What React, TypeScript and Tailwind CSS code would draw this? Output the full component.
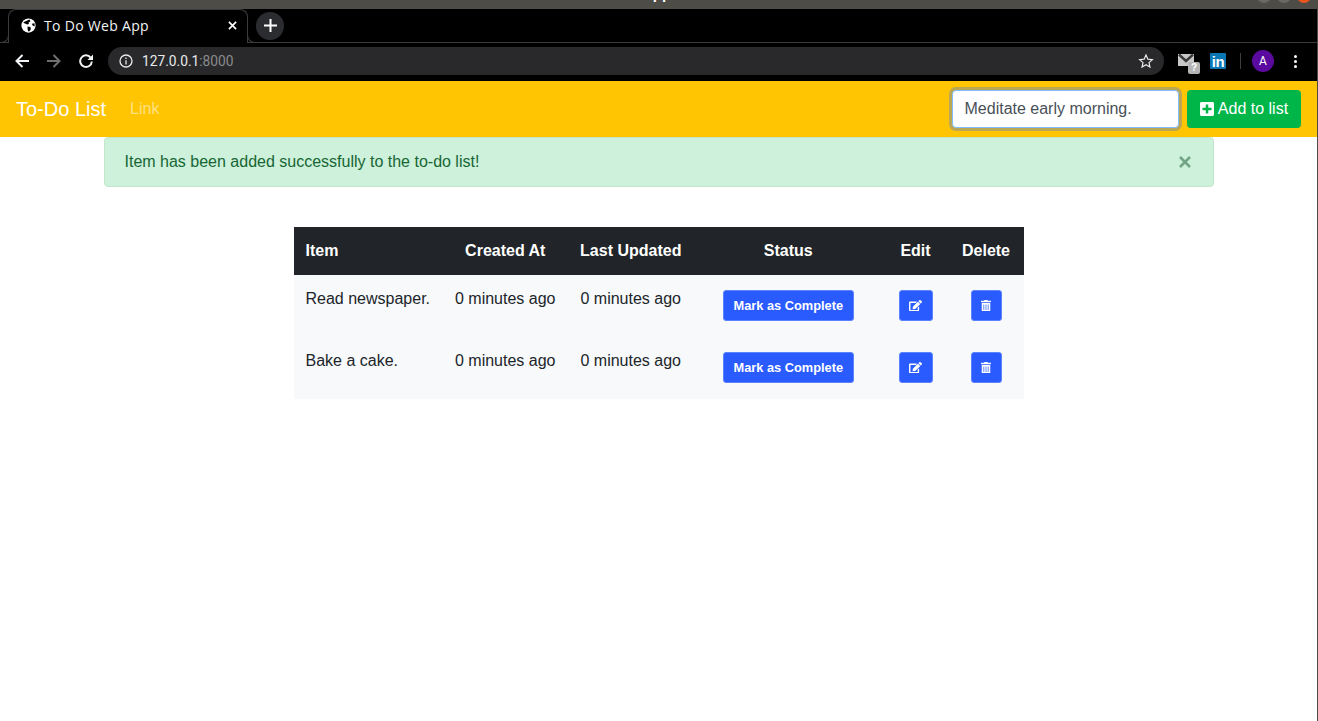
import React from "react";

const Globe = () => (
  <svg width="15" height="15" viewBox="0 0 16 16">
    <circle cx="8" cy="8" r="7.6" fill="#fff" />
    <path d="M2.5 4.5 L6 3 L9 1.5 L10 3.5 L8 5 L8.5 6.5 L6.5 7 L5 6 L3.5 5.5 Z M7 9 L10 9.5 L10.5 12 L9 14 L7.5 14 L7 11.5 Z M11.5 6 L14.5 5.5 L14.5 9 L12.5 8 Z" fill="#000" />
  </svg>
);

const BtnEdit = () => (
  <svg width="13" height="11.5" viewBox="0 0 576 512" fill="#fff">
    <path d="M402.6 83.2l90.2 90.2c3.8 3.8 3.8 10 0 13.8L274.4 405.6l-92.8 10.3c-12.4 1.4-22.9-9.1-21.5-21.5l10.3-92.8L388.8 83.2c3.8-3.8 10-3.8 13.8 0zm162-22.9l-48.8-48.8c-15.2-15.2-39.9-15.2-55.2 0l-35.4 35.4c-3.8 3.8-3.8 10 0 13.8l90.2 90.2c3.8 3.8 10 3.8 13.8 0l35.4-35.4c15.2-15.3 15.2-40 0-55.2zM384 346.2V448H64V128h229.8c3.2 0 6.2-1.3 8.5-3.5l40-40c7.6-7.6 2.2-20.5-8.5-20.5H48C21.5 64 0 85.5 0 112v352c0 26.5 21.5 48 48 48h352c26.5 0 48-21.5 48-48V306.2c0-10.7-12.9-16-20.5-8.5l-40 40c-2.2 2.3-3.5 5.3-3.5 8.5z" />
  </svg>
);

const BtnTrash = () => (
  <svg width="10" height="11.5" viewBox="0 0 448 512" fill="#fff">
    <path d="M32 464a48 48 0 0 0 48 48h288a48 48 0 0 0 48-48V128H32zm272-256a16 16 0 0 1 32 0v224a16 16 0 0 1-32 0zm-96 0a16 16 0 0 1 32 0v224a16 16 0 0 1-32 0zm-96 0a16 16 0 0 1 32 0v224a16 16 0 0 1-32 0zM432 32H312l-9.4-18.7A24 24 0 0 0 281.1 0H166.8a23.72 23.72 0 0 0-21.4 13.3L136 32H16A16 16 0 0 0 0 48v32a16 16 0 0 0 16 16h416a16 16 0 0 0 16-16V48a16 16 0 0 0-16-16z" />
  </svg>
);

const Row = ({ item }: { item: string }) => (
  <tr className="h-[62px] bg-[#f7f9fb] align-top text-[#212529]">
    <td className="pl-[11.5px] pt-[12px] whitespace-nowrap">{item}</td>
    <td className="pt-[12px] text-center whitespace-nowrap">0 minutes ago</td>
    <td className="pt-[12px] text-center whitespace-nowrap">0 minutes ago</td>
    <td className="pt-[15px] text-center">
      <button className="h-[31px] w-[131px] rounded-[3px] border border-[#5c83ff] bg-[#2a5bff] text-[12.8px] font-bold text-white">
        Mark as Complete
      </button>
    </td>
    <td className="pt-[15px] text-center">
      <button className="inline-flex h-[31px] w-[34px] items-center justify-center rounded-[3px] border border-[#5c83ff] bg-[#2a5bff]">
        <BtnEdit />
      </button>
    </td>
    <td className="pt-[15px] text-center">
      <button className="inline-flex h-[31px] w-[31px] items-center justify-center rounded-[3px] border border-[#5c83ff] bg-[#2a5bff]">
        <BtnTrash />
      </button>
    </td>
  </tr>
);

export default function App() {
  return (
    <div className="flex h-[721px] w-[1318px] flex-col overflow-hidden border-r border-[#4d4c46] bg-white font-['Liberation_Sans',sans-serif] text-base">
      {/* window title bar */}
      <div className="relative flex h-[9px] shrink-0 justify-end gap-[6px] overflow-hidden bg-[#4d4c46] pr-[6px]">
        <span className="absolute left-[642px] top-[-16px] text-[15px] font-bold leading-[20px] text-white">App</span>
        <span className="mt-[-11px] h-[14px] w-[14px] rounded-full bg-[#6a6963]" />
        <span className="mt-[-11px] h-[14px] w-[14px] rounded-full bg-[#6a6963]" />
        <span className="mt-[-11px] h-[14px] w-[14px] rounded-full bg-[#e9541f]" />
      </div>

      {/* tab strip */}
      <div className="relative flex h-[34px] shrink-0 items-center border-b border-[#3a3b3d] bg-black pl-[8px]">
        <div className="relative z-10 mb-[-1px] flex h-[34px] w-[240px] items-center self-end rounded-t-[8px] border border-b-0 border-[#3a3b3d] bg-black pb-[2px] pl-[12px] pr-[10px] font-['Open_Sans',sans-serif] text-[14px] tracking-[0.3px] text-[#f1f3f4]">
          <span className="absolute bottom-0 left-[-9px] h-[8px] w-[9px] rounded-br-[8px] border-b border-r border-[#3a3b3d]" />
          <span className="absolute bottom-0 right-[-9px] h-[8px] w-[9px] rounded-bl-[8px] border-b border-l border-[#3a3b3d]" />
          <Globe />
          <span className="ml-[8px] flex-1">To Do Web App</span>
          <svg width="9" height="9" viewBox="0 0 10 10" stroke="#fff" strokeWidth="1.8">
            <path d="M1 1 L9 9 M9 1 L1 9" />
          </svg>
        </div>
        <div className="ml-[8px] flex h-[28px] w-[28px] items-center justify-center rounded-full bg-[#2b2c2f]">
          <svg width="13" height="13" viewBox="0 0 13 13" stroke="#fff" strokeWidth="2">
            <path d="M6.5 0 V13 M0 6.5 H13" />
          </svg>
        </div>
      </div>

      {/* toolbar */}
      <div className="flex h-[38px] shrink-0 items-center bg-black pb-[2px]">
        <svg className="ml-[15px]" width="14" height="14" viewBox="0 0 14 14" fill="none" stroke="#f1f3f4" strokeWidth="2">
          <path d="M14 7 H2 M7.5 1 L1.5 7 L7.5 13" />
        </svg>
        <svg className="ml-[18px]" width="14" height="14" viewBox="0 0 14 14" fill="none" stroke="#6e6f71" strokeWidth="2">
          <path d="M0 7 H12 M6.5 1 L12.5 7 L6.5 13" />
        </svg>
        <svg className="ml-[18px]" width="14" height="14" viewBox="0 0 14 14" fill="none" stroke="#f1f3f4" strokeWidth="2">
          <path d="M11.6 3.6 A5.8 5.8 0 1 0 12.8 7.5" />
          <path d="M14 0.5 V6 H8.5 Z" fill="#f1f3f4" stroke="none" />
        </svg>
        <div className="ml-[15px] flex h-[28px] w-[1056px] items-center rounded-full bg-[#29292b] pl-[11px] pr-[10px] font-['Roboto',sans-serif] text-[13.75px]">
          <svg width="14" height="14" viewBox="0 0 14 14" fill="none" stroke="#e8eaed" strokeWidth="1.3">
            <circle cx="7" cy="7" r="6" />
            <path d="M7 6.2 V10.5 M7 3.4 V4.9" />
          </svg>
          <span className="ml-[9px] flex-1 text-[#e8eaed]">
            127.0.0.1<span className="text-[#8a8b8d]">:8000</span>
          </span>
          <svg width="16" height="16" viewBox="0 0 24 24" fill="none" stroke="#e8eaed" strokeWidth="1.8">
            <path d="M12 3 L14.8 9.2 L21.5 9.9 L16.5 14.4 L17.9 21 L12 17.6 L6.1 21 L7.5 14.4 L2.5 9.9 L9.2 9.2 Z" />
          </svg>
        </div>
        <div className="relative ml-[14px] h-[20px] w-[22px]">
          <svg width="16" height="12" viewBox="0 0 16 12" className="absolute left-0 top-[3px]">
            <rect width="16" height="12" fill="#c8c8c8" />
            <path d="M1 0.5 L8 7 L15 0.5" fill="none" stroke="#3a3a3a" strokeWidth="2.4" />
          </svg>
          <span className="absolute left-[10px] top-[11px] flex h-[12px] w-[12px] items-center justify-center rounded-[2px] bg-[#b4b4b4] text-[10px] font-bold leading-none text-white">
            ?
          </span>
        </div>
        <div className="ml-[10px] flex h-[16px] w-[16px] items-center justify-center rounded-[1px] bg-[#0a77b5] text-[15px] font-bold leading-none tracking-[-0.5px] text-white">
          in
        </div>
        <div className="ml-[14px] h-[16px] w-px bg-[#3c3d40]" />
        <div className="ml-[11px] flex h-[22px] w-[22px] items-center justify-center rounded-full bg-[#5a0a9e] font-['Roboto',sans-serif] text-[12px] text-white">
          A
        </div>
        <div className="ml-[20px] flex flex-col gap-[2px]">
          <span className="h-[3px] w-[3px] rounded-full bg-white" />
          <span className="h-[3px] w-[3px] rounded-full bg-white" />
          <span className="h-[3px] w-[3px] rounded-full bg-white" />
        </div>
      </div>

      {/* navbar */}
      <nav className="flex h-[56px] shrink-0 items-center bg-[#ffc402] pl-[16px] pr-[16px]">
        <span className="text-[20px] text-white">To-Do List</span>
        <span className="ml-[24px] flex-1 text-[rgba(255,255,255,0.5)]">Link</span>
        <div className="flex h-[38px] w-[227px] items-center rounded-[4px] border border-[#80bdff] bg-white px-[11.5px] text-[#495057] shadow-[0_0_0_3px_rgba(120,135,170,0.5)]">
          Meditate early morning.
        </div>
        <button className="ml-[8px] flex h-[38px] w-[114px] items-center justify-center rounded-[4px] bg-[#00b649] text-white">
          <svg className="mr-[4px]" width="14" height="16" viewBox="0 0 448 512" fill="#fff">
            <path d="M400 32H48C21.5 32 0 53.5 0 80v352c0 26.5 21.5 48 48 48h352c26.5 0 48-21.5 48-48V80c0-26.5-21.5-48-48-48zm-32 252c0 6.6-5.4 12-12 12h-92v92c0 6.6-5.4 12-12 12h-56c-6.6 0-12-5.4-12-12v-92H92c-6.6 0-12-5.4-12-12v-56c0-6.6 5.4-12 12-12h92v-92c0-6.6 5.4-12 12-12h56c6.6 0 12 5.4 12 12v92h92c6.6 0 12 5.4 12 12v56z" />
          </svg>
          Add to list
        </button>
      </nav>

      {/* alert */}
      <div className="ml-[104px] mr-[103px] flex h-[50px] shrink-0 items-center justify-between rounded-[4px] border border-[#c3e6cb] bg-[#cdf1da] pl-[19.5px] pr-[22px] text-[#176634]">
        <span>Item has been added successfully to the to-do list!</span>
        <svg width="12" height="12" viewBox="0 0 12 12" stroke="#72a585" strokeWidth="2.6">
          <path d="M1 1 L11 11 M11 1 L1 11" />
        </svg>
      </div>

      {/* table */}
      <table className="ml-[294px] mt-[40px] w-[730px] table-fixed border-collapse">
        <colgroup>
          <col className="w-[148.5px]" />
          <col className="w-[125.5px]" />
          <col className="w-[125.5px]" />
          <col className="w-[189.5px]" />
          <col className="w-[65px]" />
          <col className="w-[76px]" />
        </colgroup>
        <thead>
          <tr className="h-[48px] bg-[#212529] font-bold text-white">
            <th className="pl-[11.5px] text-left">Item</th>
            <th className="text-center">Created At</th>
            <th className="text-center">Last Updated</th>
            <th className="text-center">Status</th>
            <th className="text-center">Edit</th>
            <th className="text-center">Delete</th>
          </tr>
        </thead>
        <tbody>
          <Row item="Read newspaper." />
          <Row item="Bake a cake." />
        </tbody>
      </table>
    </div>
  );
}
